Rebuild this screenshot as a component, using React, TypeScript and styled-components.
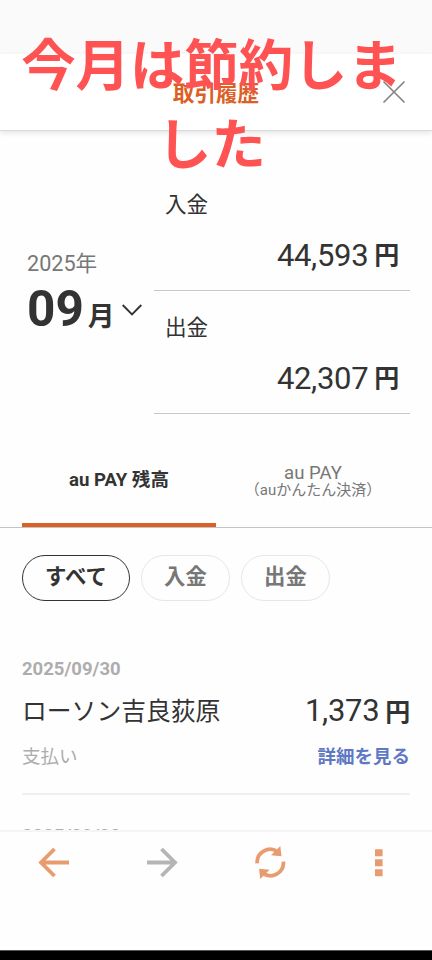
import React from 'react';
import styled, { createGlobalStyle } from 'styled-components';

const Global = createGlobalStyle`
  * { box-sizing: border-box; }
  body { margin: 0; background: #fefefe; }
  button { background: none; border: 0; padding: 0; margin: 0; font: inherit; color: inherit; }
  svg { display: block; }
`;

const Screen = styled.div`
  position: relative;
  display: flex;
  flex-direction: column;
  width: 432px;
  height: 960px;
  overflow: hidden;
  background: #fefefe;
  color: #333;
  font-family: Roboto, 'Noto Sans CJK JP', sans-serif;
`;

const StatusBar = styled.div`
  flex: none;
  height: 54px;
  background: #fafafa;
`;

const Header = styled.header`
  flex: none;
  display: grid;
  grid-template-columns: 60px 1fr 60px;
  align-items: center;
  height: 77px;
  background: #fff;
  border-bottom: 1px solid #dadada;
  box-shadow: 0 2px 5px rgba(0, 0, 0, 0.1);
`;

const HeaderTitle = styled.h1`
  grid-column: 2;
  margin: 3px 0 0;
  text-align: center;
  font-size: 21.6px;
  line-height: 32px;
  font-weight: 700;
  color: #db6026;
`;

const CloseButton = styled.button`
  display: flex;
  padding-left: 10px;
`;

const Caption = styled.div`
  position: absolute;
  z-index: 2;
  top: 22px;
  left: 11px;
  width: 401px;
  text-align: center;
  font-family: 'Noto Sans CJK JP', sans-serif;
  font-weight: 700;
  font-size: 54.4px;
  line-height: 79px;
  color: #ff5252;
`;

const Content = styled.main`
  flex: 1;
  min-height: 0;
  overflow: hidden;
`;

const Summary = styled.section`
  display: flex;
  padding: 37px 22px 0 27px;
  height: 284px;
`;

const MonthPicker = styled.div`
  width: 127px;
  padding-top: 80px;
`;

const Year = styled.div`
  font-size: 21.6px;
  line-height: 32px;
  color: #777;
`;

const MonthRow = styled.div`
  display: flex;
  align-items: baseline;
  height: 60px;
  line-height: 59px;
`;

const MonthNumber = styled.span`
  font-size: 49.5px;
  font-weight: 700;
`;

const MonthUnit = styled.span`
  margin-left: 4px;
  font-size: 26.8px;
  font-weight: 700;
`;

const Chevron = styled.svg`
  align-self: center;
  margin-left: 6px;
`;

const Totals = styled.div`
  flex: 1;
`;

const Total = styled.div`
  height: 123px;
  padding: 21px 11px 0 11px;
  border-bottom: 1px solid #c8c8c8;
`;

const TotalLabel = styled.div`
  font-size: 21.6px;
  line-height: 32px;
`;

const Amount = styled.div`
  display: flex;
  align-items: baseline;
  justify-content: flex-end;
  font-size: 31px;
  letter-spacing: -0.3px;
  line-height: 40px;
`;

const TotalAmount = styled(Amount)`
  margin-top: 15px;
`;

const Yen = styled.span<{ $raise?: number }>`
  position: relative;
  top: ${(p) => -(p.$raise ?? 0)}px;
  margin-left: 6px;
  font-size: 25px;
  font-weight: 700;
  line-height: 1;
`;

const Tabs = styled.div`
  display: grid;
  grid-template-columns: 194px 194px;
  height: 113px;
  padding: 0 22px;
  border-bottom: 1px solid #c4c4c4;
`;

const Tab = styled.button<{ $active?: boolean }>`
  display: flex;
  flex-direction: column;
  align-items: center;
  justify-content: center;
  padding-top: ${(p) => (p.$active ? 22 : 25)}px;
  border-bottom: ${(p) => (p.$active ? '4px solid #db6026' : '4px solid transparent')};
  color: ${(p) => (p.$active ? '#333' : '#777')};
  font-weight: ${(p) => (p.$active ? 700 : 400)};
  font-size: ${(p) => (p.$active ? 18.6 : 18.6)}px;
  line-height: 17px;
`;

const TabNote = styled.span`
  font-size: 15px;
  line-height: 17px;
  white-space: nowrap;
`;

const Chips = styled.div`
  display: flex;
  gap: 11px;
  padding: 27px 22px 0;
`;

const Chip = styled.button<{ $active?: boolean }>`
  width: ${(p) => (p.$active ? 108 : 89)}px;
  height: 46px;
  padding-bottom: 2px;
  border: 1px solid ${(p) => (p.$active ? '#333' : '#e6e6e6')};
  border-radius: 23px;
  color: ${(p) => (p.$active ? '#333' : '#777')};
  font-weight: 700;
  font-size: 21.4px;
  line-height: 32px;
`;

const Entry = styled.article`
  margin: 0 22px;
  height: 167px;
  border-bottom: 2px solid #f0f0f0;
`;

const Entries = styled.section`
  padding-top: 27px;
`;

const EntryDate = styled.div`
  padding-top: 30px;
  font-size: 18.5px;
  line-height: 22px;
  font-weight: 700;
  color: #adadad;
`;

const EntryRow = styled.div`
  display: flex;
  justify-content: space-between;
  align-items: baseline;
  height: 40px;
  margin-top: 11px;
  line-height: 40px;
`;

const EntryName = styled.span`
  position: relative;
  top: -1px;
  font-size: 24.8px;
`;

const EntryFooter = styled.div`
  display: flex;
  justify-content: space-between;
  margin-top: 12px;
  line-height: 28px;
  font-size: 18.5px;
`;

const Kind = styled.span`
  color: #adadad;
`;

const DetailLink = styled.a`
  font-weight: 700;
  color: #5f78c4;
`;

const NavBar = styled.nav`
  flex: none;
  display: grid;
  grid-template-columns: repeat(4, 108px);
  align-items: start;
  height: 120px;
  padding-top: 14px;
  border-top: 2px solid #f5f5f5;
`;

const NavButton = styled.button<{ $muted?: boolean }>`
  display: flex;
  justify-content: center;
  color: ${(p) => (p.$muted ? '#b5b5b5' : '#e99b70')};
`;

const SystemBar = styled.div`
  flex: none;
  height: 10px;
  background: #000;
  border-top: 1px solid #555;
`;

const totals = [
  { label: '入金', value: '44,593' },
  { label: '出金', value: '42,307' },
];

export default function App() {
  return (
    <>
      <Global />
      <Screen>
        <StatusBar />
        <Header>
          <HeaderTitle>取引履歴</HeaderTitle>
          <CloseButton aria-label="閉じる">
            <svg width="24" height="24" viewBox="0 0 24 24" stroke="#858585" strokeWidth="1.7">
              <path d="M1.5 1.5 22.5 22.5M22.5 1.5 1.5 22.5" />
            </svg>
          </CloseButton>
        </Header>
        <Content>
          <Summary>
            <MonthPicker>
              <Year>2025年</Year>
              <MonthRow>
                <MonthNumber>09</MonthNumber>
                <MonthUnit>月</MonthUnit>
                <Chevron width="22" height="14" viewBox="0 0 22 14" fill="none" stroke="#333" strokeWidth="1.9">
                  <path d="M1.7 2 11 11.3 20.3 2" />
                </Chevron>
              </MonthRow>
            </MonthPicker>
            <Totals>
              {totals.map((t) => (
                <Total key={t.label}>
                  <TotalLabel>{t.label}</TotalLabel>
                  <TotalAmount>
                    {t.value}
                    <Yen $raise={2}>円</Yen>
                  </TotalAmount>
                </Total>
              ))}
            </Totals>
          </Summary>
          <Tabs>
            <Tab $active>au PAY 残高</Tab>
            <Tab>
              au PAY
              <TabNote>（auかんたん決済）</TabNote>
            </Tab>
          </Tabs>
          <Chips>
            <Chip $active>すべて</Chip>
            <Chip>入金</Chip>
            <Chip>出金</Chip>
          </Chips>
          <Entries>
            <Entry>
              <EntryDate>2025/09/30</EntryDate>
              <EntryRow>
                <EntryName>ローソン吉良荻原</EntryName>
                <Amount>
                  1,373<Yen>円</Yen>
                </Amount>
              </EntryRow>
              <EntryFooter>
                <Kind>支払い</Kind>
                <DetailLink>詳細を見る</DetailLink>
              </EntryFooter>
            </Entry>
            <Entry>
              <EntryDate>2025/09/30</EntryDate>
            </Entry>
          </Entries>
        </Content>
        <NavBar>
          <NavButton aria-label="戻る">
            <svg width="32" height="34" viewBox="0 0 32 34" fill="none" stroke="currentColor" strokeWidth="3.8">
              <path d="M31 16.5H3M16.5 3 3 16.5 16.5 30" />
            </svg>
          </NavButton>
          <NavButton $muted aria-label="進む">
            <svg width="32" height="34" viewBox="0 0 32 34" fill="none" stroke="currentColor" strokeWidth="3.8">
              <path d="M1 16.5H29M15.5 3 29 16.5 15.5 30" />
            </svg>
          </NavButton>
          <NavButton aria-label="更新">
            <svg width="32" height="34" viewBox="0 0 32 34" fill="none">
              <path d="M3.2 17.3A13 13 0 0 1 23.5 5.6" stroke="currentColor" strokeWidth="3.8" />
              <path d="M29.4 15.7A13 13 0 0 1 9.1 27.4" stroke="currentColor" strokeWidth="3.8" />
              <path d="M26.3 0 27.5 10.2 17 9.3ZM6.2 33 5.1 22.8 15.6 23.7Z" fill="currentColor" />
            </svg>
          </NavButton>
          <NavButton aria-label="メニュー">
            <svg width="32" height="34" viewBox="0 0 32 34" fill="currentColor">
              <path d="M13 3.3h7.6v7H13zM13 13.3h7.6v7H13zM13 23.3h7.6v7H13z" />
            </svg>
          </NavButton>
        </NavBar>
        <SystemBar />
        <Caption>今月は節約しました</Caption>
      </Screen>
    </>
  );
}
